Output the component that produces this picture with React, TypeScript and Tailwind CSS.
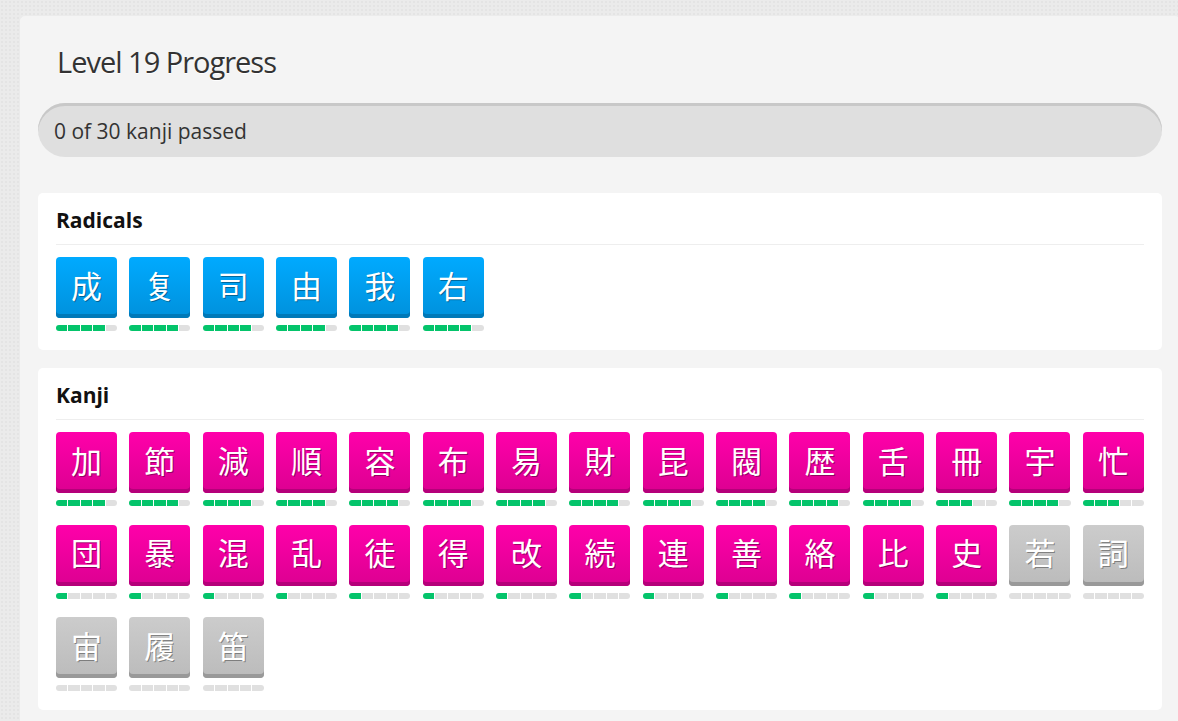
import React from 'react';

type Item = { ch: string; level: number; locked?: boolean };

const radicals: Item[] = [
  { ch: '成', level: 4 },
  { ch: '复', level: 4 },
  { ch: '司', level: 4 },
  { ch: '由', level: 4 },
  { ch: '我', level: 4 },
  { ch: '右', level: 4 },
];

const kanji: Item[] = [
  { ch: '加', level: 4 }, { ch: '節', level: 4 }, { ch: '減', level: 4 }, { ch: '順', level: 4 },
  { ch: '容', level: 4 }, { ch: '布', level: 4 }, { ch: '易', level: 4 }, { ch: '財', level: 4 },
  { ch: '昆', level: 4 }, { ch: '閥', level: 4 }, { ch: '歴', level: 4 }, { ch: '舌', level: 4 },
  { ch: '冊', level: 3 }, { ch: '宇', level: 4 }, { ch: '忙', level: 3 },
  { ch: '団', level: 1 }, { ch: '暴', level: 1 }, { ch: '混', level: 1 }, { ch: '乱', level: 1 },
  { ch: '徒', level: 1 }, { ch: '得', level: 1 }, { ch: '改', level: 1 }, { ch: '続', level: 1 },
  { ch: '連', level: 1 }, { ch: '善', level: 1 }, { ch: '絡', level: 1 }, { ch: '比', level: 1 },
  { ch: '史', level: 1 }, { ch: '若', level: 0, locked: true }, { ch: '詞', level: 0, locked: true },
  { ch: '宙', level: 0, locked: true }, { ch: '履', level: 0, locked: true }, { ch: '笛', level: 0, locked: true },
];

const tileStyles = {
  radical: 'bg-gradient-to-b from-[#00aaff] to-[#0091dc] shadow-[inset_0_-4px_0_#0079b8]',
  kanji: 'bg-gradient-to-b from-[#ff00aa] to-[#dc0091] shadow-[inset_0_-4px_0_#b5007a]',
  locked: 'bg-gradient-to-b from-[#cccccc] to-[#bbbbbb] shadow-[inset_0_-4px_0_#999999]',
};

function ProgressBar({ level }: { level: number }) {
  return (
    <div className="mt-[7px] flex h-[6px] w-[61px] gap-px">
      {[0, 1, 2, 3, 4].map(i => (
        <div
          key={i}
          className={`h-full flex-1 ${i < level ? 'bg-[#04c46b]' : 'bg-[#e0e0e0]'} ${i === 0 ? 'rounded-l-full' : ''} ${i === 4 ? 'rounded-r-full' : ''}`}
        />
      ))}
    </div>
  );
}

function Tile({ item, kind }: { item: Item; kind: 'radical' | 'kanji' }) {
  const style = item.locked ? tileStyles.locked : tileStyles[kind];
  return (
    <div className="flex flex-col">
      <div
        className={`flex h-[61px] w-[61px] items-center justify-center rounded-[4px] pb-[5px] text-[31px] text-white [text-shadow:1px_1px_0_rgba(0,0,0,0.35)] ${style}`}
        style={{ fontFamily: '"Noto Sans CJK JP", "Noto Sans CJK SC", sans-serif' }}
      >
        {item.ch}
      </div>
      <ProgressBar level={item.level} />
    </div>
  );
}

function Section({ title, items, kind }: { title: string; items: Item[]; kind: 'radical' | 'kanji' }) {
  return (
    <div className="rounded-[5px] bg-white px-[18px] pt-[13px] pb-[19px]">
      <h3 className="border-b border-[#eeeeee] pb-[10px] text-[21px] leading-[28px] font-bold text-[#111]">
        {title}
      </h3>
      <div className="mt-[12px] grid grid-cols-[repeat(15,61px)] justify-between gap-y-[18.5px]">
        {items.map((it, i) => (
          <Tile key={i} item={it} kind={kind} />
        ))}
      </div>
    </div>
  );
}

export default function App() {
  return (
    <div
      className="min-h-[721px] overflow-hidden bg-[#ebebeb] bg-[radial-gradient(#e4e4e4_1px,transparent_1px)] bg-[length:4px_4px] pt-4 pl-5"
      style={{ fontFamily: '"Open Sans", "Noto Sans CJK JP", sans-serif' }}
    >
      <div className="w-[1160px] rounded-[5px] bg-[#f4f4f4] px-[18px] pt-[27px] pb-6">
        {/* Heading */}
        <h2 className="pl-[19px] text-[29px] leading-[38px] tracking-[-1px] text-[#333] [text-shadow:0_1px_0_#fff]">
          Level 19 Progress
        </h2>

        {/* Pill */}
        <div className="mt-[22px] flex h-[54px] items-center rounded-full bg-[#dfdfdf] pl-4 pt-[3px] shadow-[inset_0_3px_0_#c8c8c8]">
          <p className="text-[21px] text-[#333]">0 of 30 kanji passed</p>
        </div>

        {/* Sections */}
        <div className="mt-9 flex flex-col gap-[18px]">
          <Section title="Radicals" items={radicals} kind="radical" />
          <Section title="Kanji" items={kanji} kind="kanji" />
        </div>
      </div>
    </div>
  );
}
